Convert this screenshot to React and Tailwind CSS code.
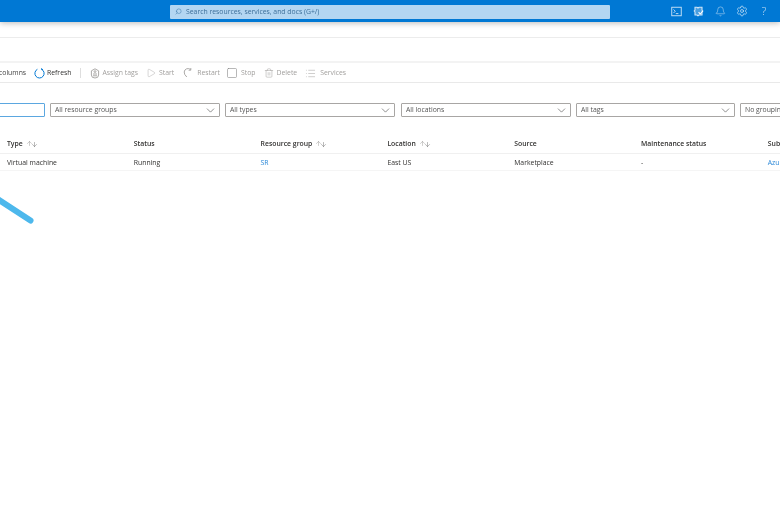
import React from "react";
import { Play, Square, Trash2, List, Search, Bell, Settings, ChevronDown, ArrowUp, ArrowDown } from "lucide-react";

const Sort = () => (
  <span className="ml-[3px] flex items-center text-[#8a8886]">
    <ArrowUp size={7} strokeWidth={1.4} className="-mr-[2px] -mt-[1px]" />
    <ArrowDown size={7} strokeWidth={1.4} className="text-[#555] mt-[1px]" />
  </span>
);

const ToolItem = ({ icon, label, className = "" }) => (
  <div className={`flex items-center text-[#a19f9d] ${className}`}>
    {icon}
    <span>{label}</span>
  </div>
);

const FilterBox = ({ label, className }) => (
  <div className={`h-[14px] shrink-0 flex items-center justify-between border border-[#a8a6a4] rounded-[1px] pl-[4px] pr-[2px] text-[#555] ${className}`}>
    <span className="whitespace-nowrap">{label}</span>
    <ChevronDown size={13} strokeWidth={1.1} className="text-[#444] shrink-0" />
  </div>
);

const Head = ({ label, sort }) => (
  <div className="flex items-center font-semibold text-[#323130] whitespace-nowrap">
    {label}
    {sort && <Sort />}
  </div>
);

const Cell = ({ children, link }) => (
  <div className={`whitespace-nowrap ${link ? "text-[#2b88d8]" : "text-[#323130]"}`}>{children}</div>
);

const TerminalIcon = () => (
  <svg width="11" height="11" viewBox="0 0 11 11" fill="none" stroke="currentColor" strokeWidth="0.9">
    <rect x="0.75" y="1.25" width="9.5" height="8.5" />
    <path d="M2.5 3.5 L4.3 5.2 L2.5 7 M4.8 7.6 H7.4" />
  </svg>
);

const DirectoryIcon = () => (
  <svg width="11" height="11" viewBox="0 0 11 11" fill="none" stroke="currentColor" strokeWidth="1.1">
    <path d="M2 1.2 H4 L5 2 L6 1.2 H9 V4 L9.8 5 L9 6 V9 H6 L5 9.8 L4 9 H2 V6 L1.2 5 L2 4 Z" fill="currentColor" fillOpacity="0.35" />
    <path d="M5.6 6.2 L7.2 8 L9.8 5.2" stroke="#ffffff" />
  </svg>
);

const TagIcon = () => (
  <svg width="10" height="11" viewBox="0 0 10 11" fill="none" stroke="currentColor" strokeWidth="0.9" className="mr-[2px]">
    <path d="M5 0.8 L8.6 2.8 V7 Q8.6 10 5 10 Q1.4 10 1.4 7 V2.8 Z" />
    <circle cx="5" cy="3.6" r="0.9" />
    <path d="M3 6 H7 M3 7.8 H7" />
  </svg>
);

const RefreshIcon = () => (
  <svg width="11" height="11" viewBox="0 0 11 11" fill="none" stroke="#0078d4" strokeWidth="1" className="mr-[2px]">
    <path d="M3.4 1.3 A4.6 4.6 0 1 0 7.6 1.3" />
    <path d="M7.6 0.3 V1.6 H9" />
  </svg>
);

const RestartIcon = () => (
  <svg width="9" height="10" viewBox="0 0 9 10" fill="none" stroke="currentColor" strokeWidth="0.9" className="mr-[5px]">
    <path d="M7.5 1.5 A3.8 3.8 0 0 0 1.2 4 Q1 6.5 3.8 9" />
    <path d="M7.8 0 V2.2 H5.6" />
  </svg>
);

export default function App() {
  return (
    <div className="relative w-[780px] h-[516px] overflow-hidden bg-white text-[6.85px] leading-[10px] blur-[0.35px]" style={{ fontFamily: '"Open Sans", "Noto Sans", sans-serif' }}>
      <header className="relative h-[22px] bg-[#0078d4] shadow-[0_1px_6px_rgba(0,0,0,0.28)] flex items-center">
        <div className="ml-[170px] mt-[1px] w-[440px] h-[14px] bg-[#b3d6f2] rounded-[1px] flex items-center pl-[5px] text-[#3d6f99]">
          <Search size={7} strokeWidth={1.5} className="-scale-x-100 text-[#2f6c9f]" />
          <span className="ml-[4px] mt-[1px]">Search resources, services, and docs (G+/)</span>
        </div>
        <div className="ml-[55px] flex items-center text-[#cfe5f7]">
          <div className="w-[22px] flex justify-center"><TerminalIcon /></div>
          <div className="w-[22px] flex justify-center"><DirectoryIcon /></div>
          <div className="w-[22px] flex justify-center"><Bell size={11} strokeWidth={1.1} /></div>
          <div className="w-[22px] flex justify-center"><Settings size={12} strokeWidth={1.4} /></div>
          <div className="w-[22px] flex justify-center text-[11px] font-light">?</div>
        </div>
      </header>

      <div className="h-[16px] border-b border-[#ececec]" />
      <div className="h-[25px] border-b-2 border-[#f3f3f3]" />

      <div className="h-[20px] border-b border-[#e9e9e9] flex items-center pt-[1px]">
        <div className="-ml-[1px] w-[27px] text-right text-[#444] overflow-hidden whitespace-nowrap shrink-0">columns</div>
        <div className="ml-[8px] flex items-center text-[#323130]">
          <RefreshIcon />
          <span>Refresh</span>
        </div>
        <div className="ml-[9px] w-px h-[10px] bg-[#dedede]" />
        <ToolItem className="ml-[9px]" label="Assign tags" icon={<TagIcon />} />
        <ToolItem className="ml-[8px]" label="Start" icon={<Play size={10} strokeWidth={1} className="mr-[3px]" />} />
        <ToolItem className="ml-[9px]" label="Restart" icon={<RestartIcon />} />
        <ToolItem className="ml-[6px]" label="Stop" icon={<Square size={12} strokeWidth={1.2} className="mr-[3px] text-[#888]" />} />
        <ToolItem className="ml-[8px]" label="Delete" icon={<Trash2 size={10} strokeWidth={1.2} className="mr-[3px]" />} />
        <ToolItem className="ml-[8px]" label="Services" icon={<List size={11} strokeWidth={1.1} className="mr-[4px]" />} />
      </div>

      <div className="mt-[20px] flex gap-[5px] -ml-[5px]">
        <div className="w-[50px] h-[14px] shrink-0 border border-[#5ba7e0] rounded-[1px]" />
        <FilterBox label="All resource groups" className="w-[170px]" />
        <FilterBox label="All types" className="w-[170px]" />
        <FilterBox label="All locations" className="w-[170px] ml-[1px]" />
        <FilterBox label="All tags" className="w-[159px]" />
        <FilterBox label="No grouping" className="w-[80px]" />
      </div>

      <div className="mt-[18px] grid grid-cols-[repeat(7,126.8px)] pl-[7px] h-[19px] items-center border-b border-[#f0f0f0]">
        <Head label="Type" sort />
        <Head label="Status" />
        <Head label="Resource group" sort />
        <Head label="Location" sort />
        <Head label="Source" />
        <Head label="Maintenance status" />
        <Head label="Subscription" />
      </div>
      <div className="grid grid-cols-[repeat(7,126.8px)] pl-[7px] h-[17px] pt-[2px] items-center border-b border-[#f5f5f5]">
        <Cell>Virtual machine</Cell>
        <Cell>Running</Cell>
        <Cell link>SR</Cell>
        <Cell>East US</Cell>
        <Cell>Marketplace</Cell>
        <Cell>-</Cell>
        <Cell link>Azure subscription</Cell>
      </div>

      <svg className="absolute left-0 top-[190px]" width="40" height="40" viewBox="0 0 40 40">
        <path d="M-4 8 L30.5 30.5" stroke="#4db8ec" strokeWidth="6" strokeLinecap="round" fill="none" />
      </svg>
    </div>
  );
}
